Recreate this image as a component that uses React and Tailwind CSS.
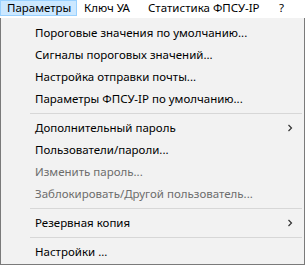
import React from "react";

const items = [
  { label: "Пороговые значения по умолчанию..." },
  { label: "Сигналы пороговых значений..." },
  { label: "Настройка отправки почты..." },
  { label: "Параметры ФПСУ-IP по умолчанию..." },
  { sep: true },
  { label: "Дополнительный пароль", sub: true },
  { label: "Пользователи/пароли..." },
  { label: "Изменить пароль...", disabled: true },
  { label: "Заблокировать/Другой пользователь...", disabled: true },
  { sep: true },
  { label: "Резервная копия", sub: true },
  { sep: true },
  { label: "Настройки ..." },
];

const Chevron = () => (
  <svg width="8" height="8" viewBox="0 0 8 8" className="mr-[10px]">
    <path d="M2.5 1 L5.5 4 L2.5 7" fill="none" stroke="#333" strokeWidth="1.2" />
  </svg>
);

const App = () => {
  return (
    <div
      className="w-[305px] h-[265px] bg-white flex flex-col text-[11.5px] text-black overflow-hidden whitespace-nowrap"
      style={{ fontFamily: '"Segoe UI", "Noto Sans", "Liberation Sans", sans-serif' }}
    >
      <div className="flex h-[18px] items-start">
        <div className="w-[77px] pl-[6px] bg-[#cce8ff] border border-[#99d1ff] h-[16px] flex items-center">
          Параметры
        </div>
        <div className="pl-[7px] w-[71px] h-[16px] flex items-center">Ключ УА</div>
        <div className="w-[131px] h-[16px] flex items-center">Статистика ФПСУ-IP</div>
        <div className="h-[16px] flex items-center">?</div>
      </div>
      <div className="flex-1 bg-[#f2f2f2] border-x border-b border-[#7a7a7a] pt-[4px] flex flex-col">
        {items.map((item, i) =>
          item.sep ? (
            <div key={i} className="h-[7px] flex items-center pl-[29px] pr-[2px]">
              <div className="h-px w-full bg-[#d7d7d7]" />
            </div>
          ) : (
            <div
              key={i}
              className={
                "h-[22px] flex items-center justify-between pl-[34px] " +
                (item.disabled ? "text-[#6d6d6d]" : "")
              }
            >
              <span>{item.label}</span>
              {item.sub && <Chevron />}
            </div>
          )
        )}
      </div>
    </div>
  );
};

export default App;
